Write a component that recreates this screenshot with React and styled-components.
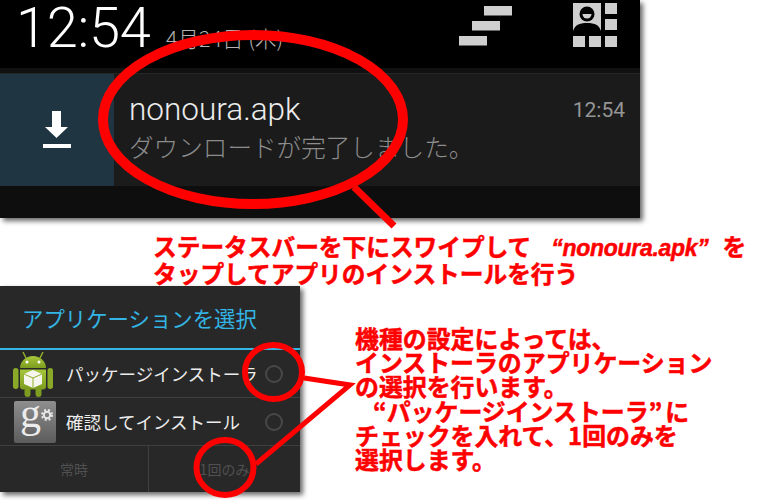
import React from "react";
import styled, { createGlobalStyle } from "styled-components";

const cjk = `"Noto Sans CJK JP", "Noto Sans", sans-serif`;

const GlobalStyle = createGlobalStyle`
  html, body {
    margin: 0;
    padding: 0;
    background: #fff;
    overflow: hidden;
  }
`;

const Page = styled.div`
  position: relative;
  width: 760px;
  height: 500px;
  overflow: hidden;
  background: #fff;
  font-family: ${cjk};
`;

const Panel = styled.section`
  width: 640px;
  height: 218px;
  display: flex;
  flex-direction: column;
  background: #000;
  box-shadow: 3px 3px 5px rgba(0, 0, 0, 0.6);
`;

const StatusHeader = styled.header`
  height: 68px;
  display: flex;
  align-items: flex-start;
  padding-left: 16px;
  color: #fff;
`;

const Clock = styled.div`
  font-family: Roboto, sans-serif;
  font-weight: 300;
  font-size: 56px;
  line-height: 56px;
  width: 150px;
  letter-spacing: -0.3px;
`;

const DateText = styled.div`
  font-weight: 300;
  font-size: 21.5px;
  line-height: 24px;
  margin-top: 26px;
  color: #b4b4b4;
  width: 293px;
  white-space: nowrap;
`;

const HeaderIcon = styled.div`
  margin-top: ${({ $top }) => $top}px;
  margin-left: ${({ $left }) => $left}px;
`;

const GhostStrip = styled.div`
  height: 5px;
  background: #111;
`;

const Notification = styled.div`
  height: 113px;
  display: flex;
  background: #1b1b1b;
  border-top: 1px solid #262626;
  box-sizing: border-box;
`;

const IconCell = styled.div`
  width: 114px;
  display: flex;
  align-items: center;
  justify-content: center;
  background: #1f3541;
`;

const NoteBody = styled.div`
  flex: 1;
  padding: 16px 15px 0 15px;
  display: flex;
  flex-direction: column;
`;

const NoteTop = styled.div`
  display: flex;
  justify-content: space-between;
  align-items: center;
`;

const NoteTitle = styled.div`
  font-family: Roboto, sans-serif;
  font-weight: 300;
  font-size: 31.5px;
  line-height: 40px;
  color: #ececec;
`;

const NoteTime = styled.div`
  font-family: Roboto, sans-serif;
  font-size: 21px;
  color: #959595;
`;

const NoteText = styled.div`
  font-weight: 300;
  font-size: 24.6px;
  line-height: 32px;
  color: #8c8c8c;
  white-space: nowrap;
`;

const PanelFooter = styled.div`
  flex: 1;
  background: #0e0e0e;
`;

const Caption = styled.p`
  margin: 16px 0 0 153px;
  height: 52px;
  font-weight: 700;
  font-size: 23.7px;
  line-height: 25px;
  color: #f00;
  -webkit-text-stroke: 0.5px #f00;
  white-space: nowrap;
`;

const Quoted = styled.span`
  font-family: "Liberation Sans", sans-serif;
  font-style: italic;
  font-weight: 700;
  font-size: 23px;
  letter-spacing: -0.3px;
  margin: 0 14px 0 20px;
`;

const BottomRow = styled.div`
  display: flex;
  align-items: flex-start;
`;

const Dialog = styled.section`
  width: 300px;
  height: 206px;
  display: flex;
  flex-direction: column;
  background: #282828;
  box-shadow: 3px 3px 5px rgba(0, 0, 0, 0.6);
  flex-shrink: 0;
`;

const DialogTitle = styled.div`
  height: 64px;
  box-sizing: border-box;
  padding-left: 22px;
  display: flex;
  align-items: center;
  font-size: 21.4px;
  color: #33b5e5;
  border-bottom: 2px solid #33b5e5;
  font-weight: 400;
  white-space: nowrap;
`;

const AppRow = styled.div`
  height: 47px;
  display: flex;
  align-items: center;
  border-bottom: 1px solid #3f3f3f;
`;

const AppIcon = styled.div`
  width: 66px;
  height: 47px;
  display: flex;
  align-items: center;
  justify-content: center;
  flex-shrink: 0;
`;

const AppLabel = styled.div`
  flex: 1;
  font-size: 17.5px;
  color: #ececec;
  white-space: nowrap;
`;

const Radio = styled.span`
  width: 14px;
  height: 14px;
  border: 2px solid #484848;
  border-radius: 50%;
  margin-right: 17px;
  flex-shrink: 0;
`;

const GPlus = styled.div`
  position: relative;
  width: 42px;
  height: 42px;
  margin-left: 4px;
  border-radius: 2px;
  background: linear-gradient(#8e8e8e, #5c5c5c);
  color: #ececec;
  font-family: "Liberation Serif", serif;
  font-size: 42px;
  line-height: 24px;
  padding-left: 6px;
  box-sizing: border-box;
`;

const Gear = styled.svg`
  position: absolute;
  top: 8px;
  right: 3px;
`;

const ButtonBar = styled.div`
  flex: 1;
  display: flex;
`;

const DialogButton = styled.div`
  flex: ${({ $wide }) => ($wide ? "0 0 151px" : "1")};
  display: flex;
  align-items: center;
  justify-content: center;
  font-size: 14px;
  color: #505050;
  border-left: ${({ $wide }) => ($wide ? "1px solid #3f3f3f" : "none")};
`;

const Note = styled.p`
  margin: 40px 0 0 55px;
  font-weight: 700;
  font-size: 23.9px;
  line-height: 24.2px;
  color: #f00;
  -webkit-text-stroke: 0.5px #f00;
  white-space: nowrap;
`;

const QuoteGap = styled.span`
  margin-left: ${({ $gap }) => $gap}px;
`;

const Overlay = styled.svg`
  position: absolute;
  left: 0;
  top: 0;
  pointer-events: none;
`;

const DownloadIcon = () => (
  <svg width="30" height="38" viewBox="0 0 30 38">
    <path d="M10 0h9v16h7L14.500 27 3 16h7z" fill="#fff" />
    <rect x="1" y="33" width="28" height="4" fill="#fff" />
  </svg>
);

const StairsIcon = () => (
  <svg width="58" height="42" viewBox="0 0 58 42">
    <rect x="25" y="0" width="28" height="9.500" fill="#cfcfcf" />
    <rect x="13" y="15" width="28" height="9.500" fill="#cfcfcf" />
    <rect x="0" y="30" width="28" height="9.500" fill="#cfcfcf" />
  </svg>
);

const ContactsIcon = () => (
  <svg width="44" height="44" viewBox="0 0 44 44">
    <rect x="0" y="0" width="28" height="28" fill="#cfcfcf" />
    <circle cx="14" cy="11" r="7.500" fill="#000" />
    <path d="M9.500 11a4.500 4.500 0 0 0 9 0z" fill="#cfcfcf" />
    <path d="M0 28c2-6 6-8 14-8s12 2 14 8z" fill="#000" />
    <rect x="32" y="0" width="12" height="11" fill="#cfcfcf" />
    <rect x="32" y="16" width="12" height="11" fill="#cfcfcf" />
    <rect x="0" y="33" width="12" height="11" fill="#cfcfcf" />
    <rect x="16" y="33" width="12" height="11" fill="#cfcfcf" />
    <rect x="32" y="33" width="12" height="11" fill="#cfcfcf" />
  </svg>
);

const AndroidIcon = () => (
  <svg width="42" height="47" viewBox="0 0 42 47">
    <defs>
      <linearGradient id="droid" x1="0" y1="0" x2="0" y2="1">
        <stop offset="0" stopColor="#a6c63a" />
        <stop offset="1" stopColor="#7d9c20" />
      </linearGradient>
    </defs>
    <path d="M11 2l3 6M31 2l-3 6" stroke="#8fb02a" strokeWidth="1.500" />
    <path d="M8 18c0-7 6-12 13-12s13 5 13 12z" fill="url(#droid)" />
    <circle cx="15" cy="12" r="1.500" fill="#fff" />
    <circle cx="27" cy="12" r="1.500" fill="#fff" />
    <path d="M8 19.500h26v17a3 3 0 0 1-3 3H11a3 3 0 0 1-3-3z" fill="url(#droid)" />
    <rect x="1" y="18" width="5.500" height="21" rx="2.700" fill="#8aa928" />
    <rect x="35.500" y="18" width="5.500" height="21" rx="2.700" fill="#8aa928" />
    <rect x="12.500" y="37" width="6" height="10" rx="3" fill="#7d9c20" />
    <rect x="23.500" y="37" width="6" height="10" rx="3" fill="#7d9c20" />
    <path d="M21 20l9 4v10l-9 4-9-4V24z" fill="#f6f6ee" />
    <path d="M12 24l9 4 9-4M21 28v10" fill="none" stroke="#8fb02a" strokeWidth="1" />
  </svg>
);

export default function App() {
  return (
    <Page>
      <GlobalStyle />
      <Panel>
        <StatusHeader>
          <Clock>12:54</Clock>
          <DateText>4月24日 (木)</DateText>
          <HeaderIcon $top={6} $left={0}>
            <StairsIcon />
          </HeaderIcon>
          <HeaderIcon $top={3} $left={56}>
            <ContactsIcon />
          </HeaderIcon>
        </StatusHeader>
        <GhostStrip />
        <Notification>
          <IconCell>
            <DownloadIcon />
          </IconCell>
          <NoteBody>
            <NoteTop>
              <NoteTitle>nonoura.apk</NoteTitle>
              <NoteTime>12:54</NoteTime>
            </NoteTop>
            <NoteText>ダウンロードが完了しました。</NoteText>
          </NoteBody>
        </Notification>
        <PanelFooter />
      </Panel>

      <Caption>
        ステータスバーを下にスワイプして
        <Quoted>“nonoura.apk”</Quoted>を
        <br />
        タップしてアプリのインストールを行う
      </Caption>

      <BottomRow>
        <Dialog>
          <DialogTitle>アプリケーションを選択</DialogTitle>
          <AppRow>
            <AppIcon>
              <AndroidIcon />
            </AppIcon>
            <AppLabel>パッケージインストーラ</AppLabel>
            <Radio />
          </AppRow>
          <AppRow>
            <AppIcon>
              <GPlus>
                g
                <Gear width="12" height="12" viewBox="0 0 12 12">
                  <circle cx="6" cy="6" r="3.200" fill="none" stroke="#e8e8e8" strokeWidth="2" />
                  <circle cx="6" cy="6" r="5" fill="none" stroke="#e8e8e8" strokeWidth="2" strokeDasharray="2 2" />
                </Gear>
              </GPlus>
            </AppIcon>
            <AppLabel>確認してインストール</AppLabel>
            <Radio />
          </AppRow>
          <ButtonBar>
            <DialogButton>常時</DialogButton>
            <DialogButton $wide>1回のみ</DialogButton>
          </ButtonBar>
        </Dialog>
        <Note>
          機種の設定によっては、
          <br />
          インストーラのアプリケーション
          <br />
          の選択を行います。
          <br />
          <QuoteGap $gap={18}>“パッケージインストーラ”</QuoteGap>
          <QuoteGap $gap={3}>に</QuoteGap>
          <br />
          チェックを入れて、1回のみを
          <br />
          選択します。
        </Note>
      </BottomRow>

      <Overlay width="760" height="500" viewBox="0 0 760 500">
        <g fill="none" stroke="#f00">
          <ellipse cx="253" cy="119.500" rx="150" ry="84.500" strokeWidth="10" />
          <path d="M354 187L394 226" strokeWidth="7" />
          <ellipse cx="273.500" cy="372" rx="28.500" ry="27" strokeWidth="6" />
          <ellipse cx="225" cy="467.500" rx="28.500" ry="27.500" strokeWidth="6" />
          <path d="M304 378L350 385L256 464" strokeWidth="5" />
        </g>
      </Overlay>
    </Page>
  );
}
